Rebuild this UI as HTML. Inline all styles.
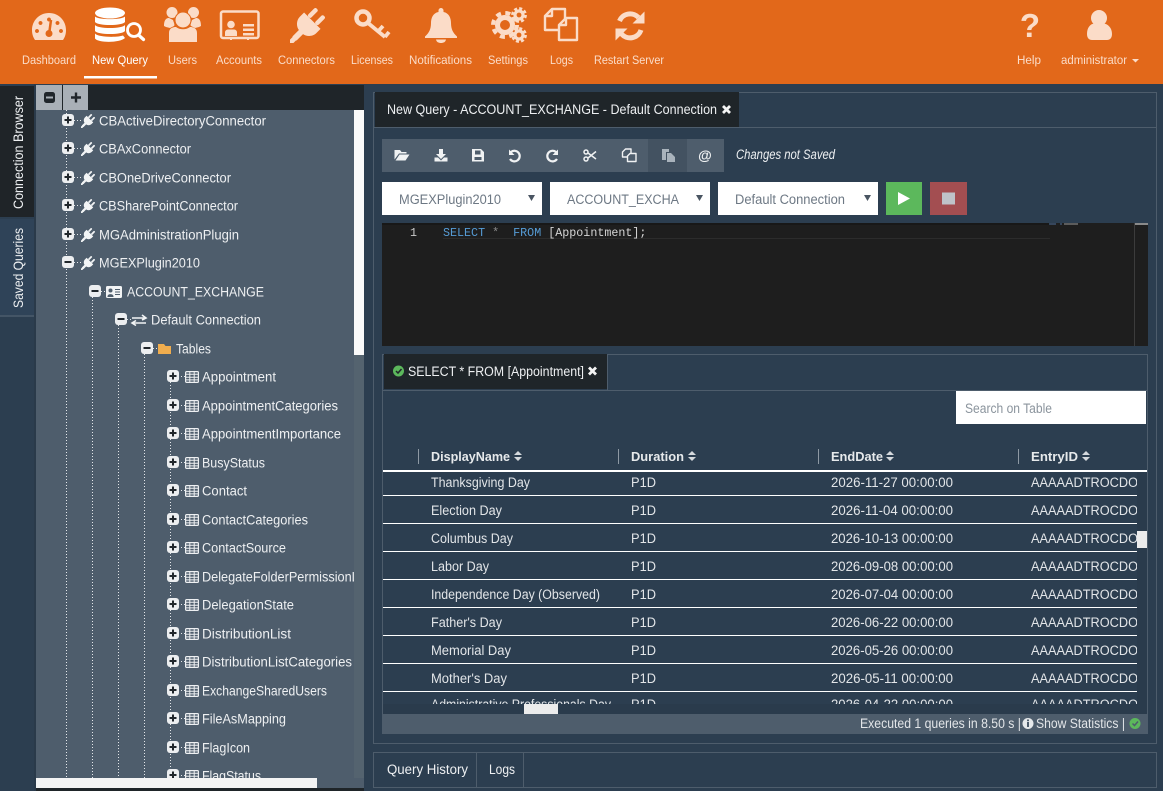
<!DOCTYPE html>
<html><head><meta charset="utf-8"><title>New Query</title>
<style>
html,body{margin:0;padding:0;background:#2c3e50;width:1163px;height:791px;overflow:hidden}
svg{display:block}
text{font-family:"Liberation Sans",sans-serif}
.h{font-size:12.4px;fill:#fbdcc8}
.t{font-size:13.4px;fill:#eef0f2}
.c{font-size:13.4px;fill:#e2e5e8}
.b{font-size:13px;font-weight:bold;fill:#e6e9eb}
.s{font-size:13.4px;fill:#6d7884}
.m{font-family:"Liberation Mono",monospace;font-size:11.7px}
.p{fill:#fbdcc8}
</style></head><body>
<svg width="1163" height="791" viewBox="0 0 1163 791" xmlns="http://www.w3.org/2000/svg">
<defs>
<symbol id="plug" viewBox="0 0 36 36"><g transform="rotate(45 18 18)" fill="currentColor"><rect x="10.5" y="-1" width="4.5" height="12" rx="2"/><rect x="21" y="-1" width="4.5" height="12" rx="2"/><path d="M6 11H30V17C30 23 25 27 21 27.500V37H15V27.500C11 27 6 23 6 17Z"/><rect x="15.500" y="34" width="5" height="10" rx="2"/></g></symbol>
<g id="pb"><rect x="0" y="0" width="12" height="12" rx="3" fill="#eceef0"/><path d="M2.500 6H9.500M6 2.500V9.500" stroke="#20262b" stroke-width="2"/></g>
<g id="mb"><rect x="0" y="0" width="12" height="12" rx="3" fill="#eceef0"/><path d="M2.500 6H9.500" stroke="#20262b" stroke-width="2"/></g>
<g id="gr"><rect x=".6" y=".6" width="12.800" height="10.800" rx="1" fill="none" stroke="#eef0f2" stroke-width="1.200"/><path d="M.6 3.300H13.400M.6 6.200H13.400M.6 8.900H13.400M4.800 .6V11.400M9.200 .6V11.400" stroke="#eef0f2" stroke-width="1"/></g>
<clipPath id="tc"><rect x="36" y="110" width="318" height="668"/></clipPath>
<clipPath id="rc"><rect x="383" y="472" width="754" height="232"/></clipPath>
</defs>

<rect width="1163" height="791" fill="#2c3e50"/>
<!-- header -->
<rect width="1163" height="84" fill="#e2681a"/>
<rect x="84" y="76" width="73" height="2.500" fill="#fff"/>

<text class="h" x="22" y="64" textLength="54" lengthAdjust="spacingAndGlyphs">Dashboard</text>
<text class="h" x="92" y="64" textLength="56" lengthAdjust="spacingAndGlyphs" style="fill:#fff">New Query</text>
<text class="h" x="168" y="64" textLength="29" lengthAdjust="spacingAndGlyphs">Users</text>
<text class="h" x="216" y="64" textLength="46" lengthAdjust="spacingAndGlyphs">Accounts</text>
<text class="h" x="278" y="64" textLength="57" lengthAdjust="spacingAndGlyphs">Connectors</text>
<text class="h" x="351" y="64" textLength="42" lengthAdjust="spacingAndGlyphs">Licenses</text>
<text class="h" x="409" y="64" textLength="63" lengthAdjust="spacingAndGlyphs">Notifications</text>
<text class="h" x="488" y="64" textLength="40" lengthAdjust="spacingAndGlyphs">Settings</text>
<text class="h" x="550" y="64" textLength="23" lengthAdjust="spacingAndGlyphs">Logs</text>
<text class="h" x="594" y="64" textLength="70" lengthAdjust="spacingAndGlyphs">Restart Server</text>
<text class="h" x="1017" y="64" textLength="24" lengthAdjust="spacingAndGlyphs">Help</text>
<text class="h" x="1061" y="64" textLength="66" lengthAdjust="spacingAndGlyphs">administrator</text>
<path d="M1132 59H1139L1135.500 62.500Z" class="p"/>

<!-- dashboard -->
<path class="p" fill-rule="evenodd" d="M49 13C39 13 32 21 32 30C32 34 33 37 35 40H63C65 37 66 34 66 30C66 21 59 13 49 13ZM49 17.500a2 2 0 1 1-.01 0ZM40.500 21a2 2 0 1 1-.01 0ZM57.500 21a2 2 0 1 1-.01 0ZM37 29a2 2 0 1 1-.01 0ZM61 29a2 2 0 1 1-.01 0Z"/>
<path d="M51 20L49.500 31" stroke="#e2681a" stroke-width="2.500"/><circle cx="49" cy="33.500" r="3.500" fill="#e2681a"/>
<!-- new query -->
<g fill="#fff"><ellipse cx="110" cy="13" rx="15" ry="5.500"/><path d="M95 16.500C98 20 122 20 125 16.500V22C122 26 98 26 95 22Z"/><path d="M95 25C98 29 122 29 125 25V31C122 35 98 35 95 31Z"/><path d="M95 33.500C98 37.500 118 37.500 123 35.500L125 38C120 43 98 43 95 38.500Z"/></g>
<circle cx="134" cy="30" r="6.500" fill="#e2681a" stroke="#fff" stroke-width="2.800"/><path d="M138.500 35L143.500 39.500" stroke="#fff" stroke-width="3.200" stroke-linecap="round"/>
<!-- users -->
<g class="p"><circle cx="172" cy="12.500" r="5.500"/><circle cx="193.500" cy="12.500" r="5.500"/><path d="M164 26C164 19 167 18 169 18L173 20C174 23 175 25 174 26L170 28L166 27Z"/><path d="M201 26C201 19 198 18 196 18L192 20C191 23 190 25 191 26L195 28L199 27Z"/><circle cx="183" cy="20" r="8" stroke="#e2681a" stroke-width="1"/><path d="M169 42V33C169 28 173 27 176 27C180 30 186 30 190 27C193 27 197 28 197 33V42Z"/></g>
<!-- accounts -->
<rect x="221" y="11.500" width="37.500" height="26.500" rx="2" fill="none" stroke="#fbdcc8" stroke-width="2.500"/>
<g class="p"><circle cx="231" cy="24.500" r="3.800"/><path d="M225 36V32.500C225 30 227 29.500 228.500 29.500H233.500C235 29.500 237 30 237 32.500V36Z"/><rect x="243" y="24" width="11" height="2.500"/><rect x="243" y="28.500" width="11" height="2.500"/><rect x="243" y="33" width="11" height="2.500"/></g>
<path d="M231 38V40M248 38V40" stroke="#fbdcc8" stroke-width="2"/>
<!-- connectors -->
<svg x="290" y="8" width="35" height="35" viewBox="0 0 36 36" style="color:#fbdcc8" overflow="visible"><use href="#plug" width="36" height="36"/></svg>
<!-- licenses -->
<circle cx="363" cy="18" r="6.500" fill="none" stroke="#fbdcc8" stroke-width="4.500"/>
<path d="M368 23L385 37M378 31.500L383 26M385 37L389 32" stroke="#fbdcc8" stroke-width="3.800" fill="none"/>
<!-- bell -->
<path class="p" d="M441 8a2.500 2.500 0 0 1 2.500 2.500V12C449 13 451 18 451 23C451 29 453 33 457 36.500V38H425V36.500C429 33 431 29 431 23C431 18 433 13 438.500 12V10.500A2.500 2.500 0 0 1 441 8Z"/><path class="p" d="M436 39.500H446C445.500 42 443.500 43 441 43C438.500 43 436.500 42 436 39.500Z"/>
<!-- settings -->
<g fill="none" stroke="#fbdcc8"><circle cx="505" cy="25" r="7.500" stroke-width="5"/><circle cx="505" cy="25" r="12" stroke-width="4" stroke-dasharray="5 4.420"/><circle cx="519" cy="15" r="4" stroke-width="3.200"/><circle cx="519" cy="15" r="6.500" stroke-width="2.800" stroke-dasharray="3 2.100"/><circle cx="519" cy="35" r="4" stroke-width="3.200"/><circle cx="519" cy="35" r="6.500" stroke-width="2.800" stroke-dasharray="3 2.100"/></g>
<!-- logs -->
<g fill="#e2681a" stroke="#fbdcc8" stroke-width="2.400" stroke-linejoin="round"><path d="M552 9H565V30H545V16Z"/><path d="M552 9V16H545" fill="none"/><path d="M566 18H577V40H559V25Z"/><path d="M566 18V25H559" fill="none"/></g>
<!-- restart -->
<path d="M619.500 21A11.500 11.500 0 0 1 638.500 17.500M641 30A11.500 11.500 0 0 1 621.500 34" fill="none" stroke="#fbdcc8" stroke-width="5"/>
<path class="p" d="M644.500 11.500V23.500H632.500ZM615.500 40.500V28.500H627.500Z"/>
<!-- help -->
<text x="1030" y="37" text-anchor="middle" style="font-size:33px;font-weight:bold;fill:#fbdcc8">?</text>
<!-- user -->
<circle cx="1099" cy="18" r="8" class="p"/>
<path class="p" d="M1087 34C1087 28 1090 24 1094 23.500C1097 25.500 1101 25.500 1104 23.500C1108 24 1112 28 1112 34C1112 38 1110 40 1107 40H1092C1089 40 1087 38 1087 34Z"/>

<!-- left vertical tabs -->
<rect x="0" y="86" width="35" height="131" fill="#1f2428"/>
<rect x="0" y="219" width="34" height="96" fill="#2f4358"/>
<rect x="0" y="315" width="34" height="2" fill="#445566"/>
<rect x="34" y="84" width="2" height="707" fill="#2a3a4a"/>
<text transform="translate(23 209) rotate(-90)" class="t" textLength="113" lengthAdjust="spacingAndGlyphs">Connection Browser</text>
<text transform="translate(23 308) rotate(-90)" class="t" textLength="80" lengthAdjust="spacingAndGlyphs">Saved Queries</text>

<!-- tree panel -->
<rect x="36" y="85" width="328" height="25" fill="#1f2529"/>
<rect x="36" y="110" width="328" height="678" fill="#4e5d6c"/>
<rect x="36" y="85" width="26" height="25" fill="#a9b0b7"/>
<rect x="63" y="85" width="25" height="25" fill="#a9b0b7"/>
<rect x="44" y="92" width="11" height="11" rx="2.500" fill="#20262b"/><rect x="46" y="96.500" width="7" height="2" fill="#a9b0b7"/>
<path d="M71 97.500H81M76 92.500V102.500" stroke="#20262b" stroke-width="2.400"/>
<rect x="354" y="110" width="10" height="245" fill="#fafafa"/>
<rect x="354" y="355" width="10" height="423" fill="#54636f"/>
<rect x="36" y="788" width="328" height="3" fill="#1f2529"/>

<g clip-path="url(#tc)">
<g fill="none" stroke="#e4e7ea" stroke-dasharray="1 2" stroke-width="1">
<path d="M66.500 110V778M92.500 297V778M118.500 325V778M144.500 354V778M170.500 382V778"/>
<path d="M74 120.500H81M74 148.500H81M74 177.500H81M74 205.500H81M74 234.500H81M74 262.500H81M101 291.500H106M127 319.500H132M153 348.500H158"/>
<path d="M178 376.500H185M178 405.500H185M178 433.500H185M178 462.500H185M178 490.500H185M178 519.500H185M178 547.500H185M178 576.500H185M178 604.500H185M178 633.500H185M178 661.500H185M178 690.500H185M178 718.500H185M178 747.500H185M178 775.500H185"/>
</g>
<use href="#pb" x="62" y="114"/><use href="#pb" x="62" y="142"/><use href="#pb" x="62" y="171"/><use href="#pb" x="62" y="199"/><use href="#pb" x="62" y="228"/><use href="#mb" x="62" y="256"/>
<use href="#mb" x="89" y="285"/><use href="#mb" x="115" y="313"/><use href="#mb" x="141" y="342"/>
<g style="color:#f2f4f5">
<use href="#plug" x="81" y="114" width="14" height="14"/><use href="#plug" x="81" y="142" width="14" height="14"/><use href="#plug" x="81" y="171" width="14" height="14"/><use href="#plug" x="81" y="199" width="14" height="14"/><use href="#plug" x="81" y="228" width="14" height="14"/><use href="#plug" x="81" y="256" width="14" height="14"/>
</g>
<rect x="106" y="286" width="16" height="12" rx="1.500" fill="#f2f4f5"/><circle cx="110.500" cy="290.500" r="2" fill="#4e5d6c"/><path d="M108 296.500C108 294 113 294 113 296.500ZM115 289.500H120M115 292H120M115 294.500H120" fill="#4e5d6c" stroke="#4e5d6c" stroke-width="1"/>
<path d="M132 318H145M142 315L146 318L142 320M146 323H133M136 320.500L132 323L136 325.500" fill="none" stroke="#f2f4f5" stroke-width="1.600"/>
<path d="M158 344H164L165.500 346H171V354H158Z" fill="#f0ad4e"/>
<g>
<use href="#pb" x="167" y="370"/><use href="#pb" x="167" y="399"/><use href="#pb" x="167" y="427"/><use href="#pb" x="167" y="456"/><use href="#pb" x="167" y="484"/><use href="#pb" x="167" y="513"/><use href="#pb" x="167" y="541"/><use href="#pb" x="167" y="570"/><use href="#pb" x="167" y="598"/><use href="#pb" x="167" y="627"/><use href="#pb" x="167" y="655"/><use href="#pb" x="167" y="684"/><use href="#pb" x="167" y="712"/><use href="#pb" x="167" y="741"/><use href="#pb" x="167" y="769"/>
<use href="#gr" x="185" y="371"/><use href="#gr" x="185" y="400"/><use href="#gr" x="185" y="428"/><use href="#gr" x="185" y="457"/><use href="#gr" x="185" y="485"/><use href="#gr" x="185" y="514"/><use href="#gr" x="185" y="542"/><use href="#gr" x="185" y="571"/><use href="#gr" x="185" y="599"/><use href="#gr" x="185" y="628"/><use href="#gr" x="185" y="656"/><use href="#gr" x="185" y="685"/><use href="#gr" x="185" y="713"/><use href="#gr" x="185" y="742"/><use href="#gr" x="185" y="770"/>
</g>
<text class="t" x="99" y="125.500" textLength="167" lengthAdjust="spacingAndGlyphs">CBActiveDirectoryConnector</text>
<text class="t" x="99" y="153.500" textLength="92" lengthAdjust="spacingAndGlyphs">CBAxConnector</text>
<text class="t" x="99" y="182.500" textLength="132" lengthAdjust="spacingAndGlyphs">CBOneDriveConnector</text>
<text class="t" x="99" y="210.500" textLength="139" lengthAdjust="spacingAndGlyphs">CBSharePointConnector</text>
<text class="t" x="99" y="239.500" textLength="140" lengthAdjust="spacingAndGlyphs">MGAdministrationPlugin</text>
<text class="t" x="99" y="267.500" textLength="101" lengthAdjust="spacingAndGlyphs">MGEXPlugin2010</text>
<text class="t" x="127" y="296.500" textLength="137" lengthAdjust="spacingAndGlyphs">ACCOUNT_EXCHANGE</text>
<text class="t" x="151" y="324.500" textLength="110" lengthAdjust="spacingAndGlyphs">Default Connection</text>
<text class="t" x="176" y="353.500" textLength="35" lengthAdjust="spacingAndGlyphs">Tables</text>
<text class="t" x="202" y="381.500" textLength="74" lengthAdjust="spacingAndGlyphs">Appointment</text>
<text class="t" x="202" y="410.500" textLength="136" lengthAdjust="spacingAndGlyphs">AppointmentCategories</text>
<text class="t" x="202" y="438.500" textLength="139" lengthAdjust="spacingAndGlyphs">AppointmentImportance</text>
<text class="t" x="202" y="467.500" textLength="63" lengthAdjust="spacingAndGlyphs">BusyStatus</text>
<text class="t" x="202" y="495.500" textLength="45" lengthAdjust="spacingAndGlyphs">Contact</text>
<text class="t" x="202" y="524.500" textLength="106" lengthAdjust="spacingAndGlyphs">ContactCategories</text>
<text class="t" x="202" y="552.500" textLength="84" lengthAdjust="spacingAndGlyphs">ContactSource</text>
<text class="t" x="202" y="581.500" textLength="180" lengthAdjust="spacingAndGlyphs">DelegateFolderPermissionLevel</text>
<text class="t" x="202" y="609.500" textLength="92" lengthAdjust="spacingAndGlyphs">DelegationState</text>
<text class="t" x="202" y="638.500" textLength="89" lengthAdjust="spacingAndGlyphs">DistributionList</text>
<text class="t" x="202" y="666.500" textLength="150" lengthAdjust="spacingAndGlyphs">DistributionListCategories</text>
<text class="t" x="202" y="695.500" textLength="125" lengthAdjust="spacingAndGlyphs">ExchangeSharedUsers</text>
<text class="t" x="202" y="723.500" textLength="84" lengthAdjust="spacingAndGlyphs">FileAsMapping</text>
<text class="t" x="202" y="752.500" textLength="48" lengthAdjust="spacingAndGlyphs">FlagIcon</text>
<text class="t" x="202" y="780.500" textLength="59" lengthAdjust="spacingAndGlyphs">FlagStatus</text>
</g>
<rect x="36" y="778" width="281" height="10" fill="#f4f4f4"/>

<!-- main panel frame -->
<rect x="373.500" y="92.500" width="783" height="651" fill="none" stroke="#4e5d6c"/>
<path d="M374 127.500H1156" stroke="#4e5d6c"/>
<rect x="375" y="92" width="364" height="35" fill="#1f2529"/>
<text class="t" x="387" y="114" textLength="330" lengthAdjust="spacingAndGlyphs">New Query - ACCOUNT_EXCHANGE - Default Connection</text>
<path d="M723 106L730 113M730 106L723 113" stroke="#f4f4f4" stroke-width="2.800"/>

<!-- toolbar -->
<rect x="382" y="139" width="266" height="33" fill="#4e5d6c"/>
<rect x="648" y="139" width="39" height="33" fill="#435261"/>
<rect x="687" y="139" width="37" height="33" fill="#4e5d6c"/>
<path fill="#f0f2f3" d="M394.500 150H400L401.500 152H406.500V153.500H399L394.500 159.500ZM399.500 154.500H409.500L405.500 160.500H395.500Z"/>
<path fill="#f0f2f3" d="M439 149H443V154H446L441 159L436 154H439ZM434.500 157.500H438L441 160.500L444 157.500H447.500V161.500H434.500Z"/>
<path fill="#f0f2f3" fill-rule="evenodd" d="M472 149H481L484 152V161.500H472ZM475 150.500V154.500H480.500V150.500ZM474.500 157V160H481.500V157Z"/>
<path d="M511 152A5.300 5.300 0 1 1 510 159" fill="none" stroke="#f0f2f3" stroke-width="2.200"/><path d="M509 149.500V155H514.500Z" fill="#f0f2f3"/>
<path d="M556 152A5.300 5.300 0 1 0 557 159" fill="none" stroke="#f0f2f3" stroke-width="2.200"/><path d="M558 149.500V155H552.500Z" fill="#f0f2f3"/>
<g fill="none" stroke="#f0f2f3" stroke-width="1.500"><circle cx="586" cy="152" r="2"/><circle cx="586" cy="159" r="2"/><path d="M588 153L596 159M588 158L596 151.500"/></g>
<g fill="#4e5d6c" stroke="#f0f2f3" stroke-width="1.400" stroke-linejoin="round"><path d="M625.500 149H631V157H622.500V152Z"/><path d="M630 153.500H636V161.500H627.500V156Z"/></g>
<g fill="#a9b3bc"><path d="M662 149H669V152H666V160H662Z"/><path d="M667 153H671L675 157V162H667Z"/></g>
<text x="705" y="160" text-anchor="middle" style="font-size:14px;font-weight:bold;fill:#f0f2f3">@</text>
<text x="736" y="159" style="font-size:13.4px;font-style:italic;fill:#eef0f2" textLength="99" lengthAdjust="spacingAndGlyphs">Changes not Saved</text>

<!-- selects -->
<rect x="382" y="182" width="160" height="33" fill="#fff"/><rect x="550" y="182" width="160" height="33" fill="#fff"/><rect x="718" y="182" width="160" height="33" fill="#fff"/>
<text class="s" x="399" y="204" textLength="102" lengthAdjust="spacingAndGlyphs">MGEXPlugin2010</text>
<text class="s" x="567" y="204" textLength="112" lengthAdjust="spacingAndGlyphs">ACCOUNT_EXCHA</text>
<text class="s" x="735" y="204" textLength="110" lengthAdjust="spacingAndGlyphs">Default Connection</text>
<path fill="#4a5562" d="M528 195H535L531.500 201ZM696 195H703L699.500 201ZM864 195H871L867.500 201Z"/>
<rect x="886" y="182" width="36" height="33" fill="#5cb85c"/>
<path d="M898 192L910 198.500L898 205Z" fill="#fff"/>
<rect x="930" y="182" width="37" height="33" fill="#a34e51"/>
<rect x="942" y="192.500" width="13" height="12" fill="#bfc3c9"/>

<!-- editor -->
<rect x="382" y="223" width="766" height="123" fill="#1e1e1e"/>
<rect x="382" y="223" width="668" height="2" fill="#181818"/>
<path d="M443 238.500H1050" stroke="#2c2c2c"/>
<path d="M1134.500 223V346" stroke="#3c3c3c"/>
<rect x="1135" y="223" width="13" height="2" fill="#8a8a8a"/>
<path d="M1049 224H1056M1060 224H1062" stroke="#4d6f99"/><path d="M1064 224H1078" stroke="#999"/>
<text class="m" x="410" y="236" style="fill:#c8c8c8">1</text>
<text class="m" x="443" y="236" xml:space="preserve"><tspan fill="#569cd6">SELECT</tspan><tspan fill="#8a8a8a"> *  </tspan><tspan fill="#569cd6">FROM</tspan><tspan fill="#d4d4d4"> [Appointment];</tspan></text>

<!-- results -->
<rect x="382.500" y="354.500" width="765" height="379" fill="none" stroke="#4e5d6c"/>
<path d="M383 390.500H1147" stroke="#4e5d6c"/>
<rect x="384" y="354" width="223" height="35" fill="#1f2529"/>
<path d="M607.500 354V390" stroke="#4e5d6c"/>
<circle cx="398.500" cy="371" r="5.500" fill="#5cb85c"/><path d="M396 371L398 373L401.500 369" fill="none" stroke="#1f2529" stroke-width="1.500"/>
<text class="t" x="408" y="376" textLength="176" lengthAdjust="spacingAndGlyphs">SELECT * FROM [Appointment]</text>
<path d="M589 367.500L596 374.500M596 367.500L589 374.500" stroke="#f4f4f4" stroke-width="2.800"/>
<rect x="956" y="391" width="190" height="33" fill="#fff"/>
<text class="s" x="965" y="413" style="fill:#8b949d" textLength="87" lengthAdjust="spacingAndGlyphs">Search on Table</text>

<path d="M418.500 449V464M618.500 449V464M818.500 449V464M1018.500 449V464" stroke="#8e99a4"/>
<text class="b" x="431" y="461" textLength="79" lengthAdjust="spacingAndGlyphs">DisplayName</text>
<text class="b" x="631" y="461" textLength="53" lengthAdjust="spacingAndGlyphs">Duration</text>
<text class="b" x="831" y="461" textLength="52" lengthAdjust="spacingAndGlyphs">EndDate</text>
<text class="b" x="1031" y="461" textLength="47" lengthAdjust="spacingAndGlyphs">EntryID</text>
<path fill="#d5d9dd" d="M514 455L518 451L522 455ZM514 457H522L518 461ZM688 455L692 451L696 455ZM688 457H696L692 461ZM886 455L890 451L894 455ZM886 457H894L890 461ZM1082 455L1086 451L1090 455ZM1082 457H1090L1086 461Z"/>
<rect x="383" y="470" width="764" height="2" fill="#fff"/>

<g clip-path="url(#rc)">
<path d="M383 495.500H1137M383 523.500H1137M383 551.500H1137M383 579.500H1137M383 607.500H1137M383 635.500H1137M383 663.500H1137M383 691.500H1137" stroke="#fff"/>
<g class="c">
<text class="c" x="431" y="487" textLength="99" lengthAdjust="spacingAndGlyphs">Thanksgiving Day</text>
<text class="c" x="431" y="515" textLength="71" lengthAdjust="spacingAndGlyphs">Election Day</text>
<text class="c" x="431" y="543" textLength="82" lengthAdjust="spacingAndGlyphs">Columbus Day</text>
<text class="c" x="431" y="571" textLength="58" lengthAdjust="spacingAndGlyphs">Labor Day</text>
<text class="c" x="431" y="599" textLength="169" lengthAdjust="spacingAndGlyphs">Independence Day (Observed)</text>
<text class="c" x="431" y="627" textLength="71" lengthAdjust="spacingAndGlyphs">Father's Day</text>
<text class="c" x="431" y="655" textLength="80" lengthAdjust="spacingAndGlyphs">Memorial Day</text>
<text class="c" x="431" y="683" textLength="76" lengthAdjust="spacingAndGlyphs">Mother's Day</text>
<text class="c" x="431" y="709" textLength="180" lengthAdjust="spacingAndGlyphs">Administrative Professionals Day</text>
<text class="c" x="631" y="487" textLength="25" lengthAdjust="spacingAndGlyphs">P1D</text>
<text class="c" x="631" y="515" textLength="25" lengthAdjust="spacingAndGlyphs">P1D</text>
<text class="c" x="631" y="543" textLength="25" lengthAdjust="spacingAndGlyphs">P1D</text>
<text class="c" x="631" y="571" textLength="25" lengthAdjust="spacingAndGlyphs">P1D</text>
<text class="c" x="631" y="599" textLength="25" lengthAdjust="spacingAndGlyphs">P1D</text>
<text class="c" x="631" y="627" textLength="25" lengthAdjust="spacingAndGlyphs">P1D</text>
<text class="c" x="631" y="655" textLength="25" lengthAdjust="spacingAndGlyphs">P1D</text>
<text class="c" x="631" y="683" textLength="25" lengthAdjust="spacingAndGlyphs">P1D</text>
<text class="c" x="631" y="709" textLength="25" lengthAdjust="spacingAndGlyphs">P1D</text>
<text class="c" x="831" y="487" textLength="122" lengthAdjust="spacingAndGlyphs">2026-11-27 00:00:00</text>
<text class="c" x="831" y="515" textLength="122" lengthAdjust="spacingAndGlyphs">2026-11-04 00:00:00</text>
<text class="c" x="831" y="543" textLength="122" lengthAdjust="spacingAndGlyphs">2026-10-13 00:00:00</text>
<text class="c" x="831" y="571" textLength="122" lengthAdjust="spacingAndGlyphs">2026-09-08 00:00:00</text>
<text class="c" x="831" y="599" textLength="122" lengthAdjust="spacingAndGlyphs">2026-07-04 00:00:00</text>
<text class="c" x="831" y="627" textLength="122" lengthAdjust="spacingAndGlyphs">2026-06-22 00:00:00</text>
<text class="c" x="831" y="655" textLength="122" lengthAdjust="spacingAndGlyphs">2026-05-26 00:00:00</text>
<text class="c" x="831" y="683" textLength="122" lengthAdjust="spacingAndGlyphs">2026-05-11 00:00:00</text>
<text class="c" x="831" y="709" textLength="122" lengthAdjust="spacingAndGlyphs">2026-04-22 00:00:00</text>
<text class="c" x="1031" y="487" textLength="107" lengthAdjust="spacingAndGlyphs">AAAAADTROCDO</text>
<text class="c" x="1031" y="515" textLength="107" lengthAdjust="spacingAndGlyphs">AAAAADTROCDO</text>
<text class="c" x="1031" y="543" textLength="107" lengthAdjust="spacingAndGlyphs">AAAAADTROCDO</text>
<text class="c" x="1031" y="571" textLength="107" lengthAdjust="spacingAndGlyphs">AAAAADTROCDO</text>
<text class="c" x="1031" y="599" textLength="107" lengthAdjust="spacingAndGlyphs">AAAAADTROCDO</text>
<text class="c" x="1031" y="627" textLength="107" lengthAdjust="spacingAndGlyphs">AAAAADTROCDO</text>
<text class="c" x="1031" y="655" textLength="107" lengthAdjust="spacingAndGlyphs">AAAAADTROCDO</text>
<text class="c" x="1031" y="683" textLength="107" lengthAdjust="spacingAndGlyphs">AAAAADTROCDO</text>
<text class="c" x="1031" y="709" textLength="107" lengthAdjust="spacingAndGlyphs">AAAAADTROCDO</text>
</g>
</g>
<rect x="1137" y="472" width="10" height="232" fill="#2a3b4c"/>
<rect x="1137" y="531" width="10" height="17" fill="#ececec"/>
<rect x="383" y="704" width="764" height="10" fill="#2a3b4c"/>
<rect x="524" y="704" width="34" height="10" fill="#ececec"/>
<rect x="383" y="714" width="764" height="19" fill="#4e5d6c"/>
<text class="c" x="860" y="728" textLength="161" lengthAdjust="spacingAndGlyphs">Executed 1 queries in 8.50 s |</text>
<circle cx="1028" cy="723.500" r="5.500" fill="#e6e9eb"/><rect x="1027" y="722" width="2" height="5" fill="#4e5d6c"/><rect x="1027" y="719.500" width="2" height="1.700" fill="#4e5d6c"/>
<text class="c" x="1036" y="728" textLength="89" lengthAdjust="spacingAndGlyphs">Show Statistics |</text>
<circle cx="1135" cy="723.500" r="5.500" fill="#5cb85c"/><path d="M1132.500 723.500L1134.500 725.500L1138 721.500" fill="none" stroke="#4e5d6c" stroke-width="1.500"/>

<!-- bottom tabs -->
<rect x="373.500" y="752.500" width="783" height="35" fill="none" stroke="#4e5d6c"/>
<path d="M476.500 752V787M523.500 752V787" stroke="#4e5d6c"/>
<text class="t" x="387" y="774" textLength="81" lengthAdjust="spacingAndGlyphs">Query History</text>
<text class="t" x="489" y="774" textLength="26" lengthAdjust="spacingAndGlyphs">Logs</text>
</svg>
</body></html>
